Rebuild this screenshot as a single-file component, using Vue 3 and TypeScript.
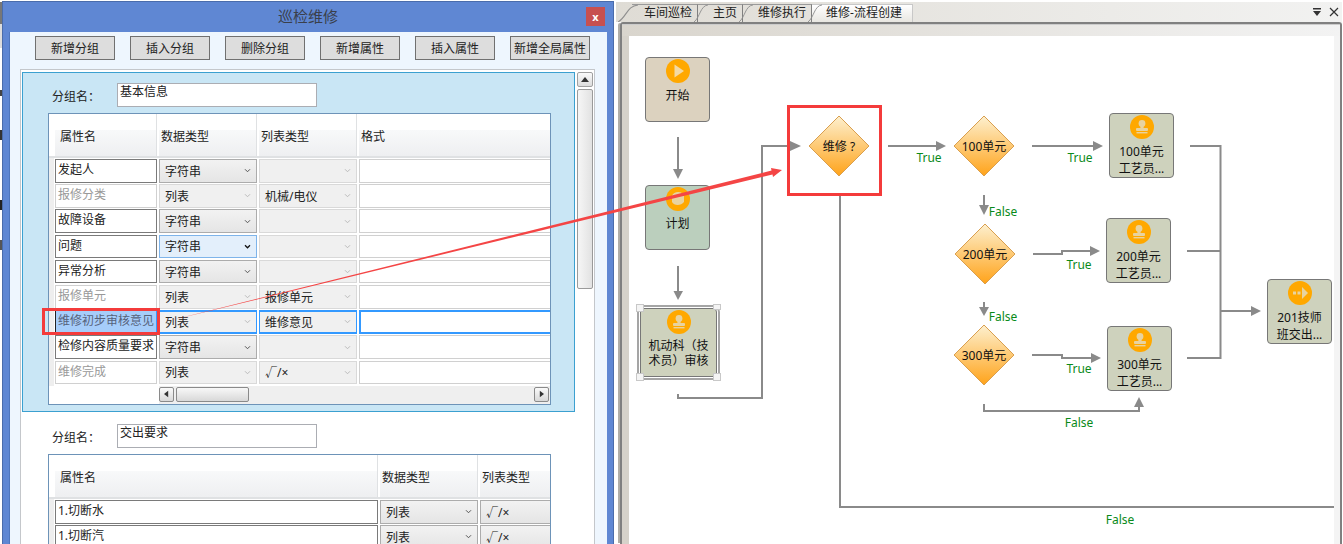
<script setup lang="ts">
type Row = {
  name: string
  type: string
  list?: string
  locked?: boolean
  selected?: boolean
  focused?: boolean
}

type FlowNode = {
  x: number
  y: number
  w: number
  h: number
  bg: string
  icon: 'play' | 'plan' | 'stamp' | 'next'
  lines: string[]
  selected?: boolean
}

const buttons = ['新增分组', '插入分组', '删除分组', '新增属性', '插入属性', '新增全局属性']

const rows: Row[] = [
  { name: '发起人', type: '字符串' },
  { name: '报修分类', type: '列表', list: '机械/电仪', locked: true },
  { name: '故障设备', type: '字符串' },
  { name: '问题', type: '字符串', focused: true },
  { name: '异常分析', type: '字符串' },
  { name: '报修单元', type: '列表', list: '报修单元', locked: true },
  { name: '维修初步审核意见', type: '列表', list: '维修意见', locked: true, selected: true },
  { name: '检修内容质量要求', type: '字符串' },
  { name: '维修完成', type: '列表', list: '√/×', locked: true },
]

const handoverRows = ['1.切断水', '1.切断汽']

const tabs = ['车间巡检', '主页', '维修执行', '维修-流程创建']

// 画布原点，下面的坐标都按整页算
const OX = 629
const OY = 36

const nodes: FlowNode[] = [
  { x: 645, y: 57, w: 65, h: 65, bg: '#dcd2bf', icon: 'play', lines: ['开始'] },
  { x: 645, y: 185, w: 65, h: 65, bg: '#bbcfbd', icon: 'plan', lines: ['计划'] },
  { x: 640, y: 308, w: 77, h: 69, bg: '#ced2bd', icon: 'stamp', lines: ['机动科（技', '术员）审核'], selected: true },
  { x: 1109, y: 113, w: 65, h: 65, bg: '#ced2bd', icon: 'stamp', lines: ['100单元', '工艺员...'] },
  { x: 1106, y: 218, w: 65, h: 65, bg: '#ced2bd', icon: 'stamp', lines: ['200单元', '工艺员...'] },
  { x: 1107, y: 326, w: 65, h: 65, bg: '#ced2bd', icon: 'stamp', lines: ['300单元', '工艺员...'] },
  { x: 1267, y: 279, w: 65, h: 65, bg: '#ced2bd', icon: 'next', lines: ['201技师', '班交出...'] },
]

const diamonds = [
  { x: 839, y: 146, text: '维修 ?' },
  { x: 984, y: 146, text: '100单元' },
  { x: 985, y: 254, text: '200单元' },
  { x: 984, y: 355, text: '300单元' },
]

const edgeLines = [
  'M678 137V170',
  'M678 266V292',
  'M678 394V398H762V146H791',
  'M840 195V507H1334',
  'M888 146H937',
  'M1032 146H1094',
  'M984 195V206',
  'M1033 254H1062V251H1091',
  'M984 302V308',
  'M1032 355H1062V358H1092',
  'M984 404V411H1139V406',
  'M1190 146H1220.5V358H1187',
  'M1187 251H1220',
  'M1220 311H1252',
]

const edgeHeads = [
  '673,169 683,169 678,179',
  '673.5,291 683,291 678,300',
  '790,141 790,151 801,146',
  '936,141 936,151 946,146',
  '1093,141 1093,151 1103,146',
  '979,205 989,205 984,215',
  '1090,246 1090,256 1100,251',
  '979,307 989,307 984,316',
  '1091,353 1091,363 1101,358',
  '1134,407 1144,407 1139,397',
  '1251,306 1251,316 1261,311',
]

const labels = [
  { x: 929, y: 158, text: 'True' },
  { x: 1080, y: 158, text: 'True' },
  { x: 1003, y: 212, text: 'False' },
  { x: 1079, y: 265, text: 'True' },
  { x: 1003, y: 317, text: 'False' },
  { x: 1079, y: 369, text: 'True' },
  { x: 1079, y: 423, text: 'False' },
  { x: 1120, y: 520, text: 'False' },
]
</script>

<template>
  <div class="screen">
    <div class="edge"></div>

    <!-- 左边的弹窗 -->
    <section class="dialog">
      <header class="dialog-title">
        <span>巡检维修</span>
        <button class="close">x</button>
      </header>

      <div class="client">
        <div class="toolbar">
          <button v-for="b in buttons" :key="b" class="tool-btn">{{ b }}</button>
        </div>

        <div class="form-box">
          <div class="groups">
            <div class="group active">
              <div class="group-head">
                <label>分组名：</label>
                <div class="group-input">基本信息</div>
              </div>
              <div class="table">
                <div class="thead cols-a">
                  <div class="th">属性名</div>
                  <div class="th">数据类型</div>
                  <div class="th">列表类型</div>
                  <div class="th">格式</div>
                </div>
                <div class="tbody">
                  <div v-for="r in rows" :key="r.name" class="tr cols-a">
                    <div class="cell name" :class="{ locked: r.locked, selected: r.selected }">{{ r.name }}</div>
                    <div class="cell select" :class="{ locked: r.locked, focused: r.focused, selected: r.selected }">
                      <span>{{ r.type }}</span>
                      <svg class="chev" viewBox="0 0 8 6"><path d="M1 1.5 4 4.5 7 1.5" /></svg>
                    </div>
                    <div class="cell select locked" :class="{ selected: r.selected }">
                      <span>{{ r.list }}</span>
                      <svg class="chev" viewBox="0 0 8 6"><path d="M1 1.5 4 4.5 7 1.5" /></svg>
                    </div>
                    <div class="cell format" :class="{ selected: r.selected }"></div>
                  </div>
                </div>
                <div class="hscroll">
                  <div class="hs-spacer"></div>
                  <div class="hs-track">
                    <div class="hs-btn"><svg viewBox="0 0 6 8"><path d="M5 0V8L0 4Z" /></svg></div>
                    <div class="hs-thumb"></div>
                    <div class="hs-btn end"><svg viewBox="0 0 6 8"><path d="M1 0V8L6 4Z" /></svg></div>
                  </div>
                </div>
              </div>
            </div>

            <div class="group">
              <div class="group-head">
                <label>分组名：</label>
                <div class="group-input">交出要求</div>
              </div>
              <div class="table">
                <div class="thead cols-b">
                  <div class="th">属性名</div>
                  <div class="th">数据类型</div>
                  <div class="th">列表类型</div>
                </div>
                <div class="tbody">
                  <div v-for="n in handoverRows" :key="n" class="tr cols-b">
                    <div class="cell name">{{ n }}</div>
                    <div class="cell select">
                      <span>列表</span>
                      <svg class="chev" viewBox="0 0 8 6"><path d="M1 1.5 4 4.5 7 1.5" /></svg>
                    </div>
                    <div class="cell select"><span>√/×</span></div>
                  </div>
                </div>
              </div>
            </div>
          </div>

          <div class="vscroll">
            <div class="vs-btn"><svg viewBox="0 0 8 5"><path d="M4 0 8 5H0Z" /></svg></div>
            <div class="vs-thumb"></div>
          </div>
        </div>
      </div>
    </section>

    <!-- 右边的流程页 -->
    <section class="workspace">
      <div class="tab-strip">
        <div class="tabs">
          <div v-for="(t, i) in tabs" :key="t" class="tab" :class="{ current: i === tabs.length - 1, first: i === 0 }">
            <svg class="slant" viewBox="0 0 16 19" preserveAspectRatio="none">
              <path d="M0 19C7 14 7 2 16 1" />
            </svg>
            {{ t }}
          </div>
        </div>
        <div class="strip-icons">
          <svg width="10" height="10" viewBox="0 0 10 10"><path d="M1 1H9V2.5H1ZM1 4H9L5 9Z" fill="#333" /></svg>
          <svg width="10" height="10" viewBox="0 0 10 10"><path d="M1 1 9 9M9 1 1 9" stroke="#333" stroke-width="1.2" /></svg>
        </div>
      </div>

      <div class="frame">
        <div class="frame-head"></div>
        <div class="frame-body">
          <div class="canvas">
            <svg class="edges" :viewBox="`${OX} ${OY} 705 508`">
              <path v-for="d in edgeLines" :key="d" :d="d" />
              <polygon v-for="p in edgeHeads" :key="p" :points="p" />
            </svg>

            <div
              v-for="n in nodes"
              :key="n.lines[0]"
              class="node"
              :class="{ picked: n.selected }"
              :style="{ left: n.x - OX + 'px', top: n.y - OY + 'px', width: n.w + 'px', height: n.h + 'px', background: n.bg }"
            >
              <svg class="badge" viewBox="0 0 24 24">
                <circle cx="12" cy="12" r="12" fill="#ffa800" />
                <path v-if="n.icon === 'play'" d="M8.5 5.5 18 12 8.5 18.5Z" fill="#f3d9a4" />
                <path v-else-if="n.icon === 'plan'" d="M6 9C7 5 13 4 16 6L14 9H18V15C15 19 8 19 6 15Z" fill="#e8d3a0" />
                <g v-else-if="n.icon === 'stamp'" fill="#e8d3a0">
                  <circle cx="12" cy="8.5" r="3.4" />
                  <rect x="10.4" y="10" width="3.2" height="4" />
                  <rect x="6" y="13" width="12" height="3" rx="1" />
                  <rect x="6.5" y="17" width="11" height="1.4" />
                </g>
                <g v-else fill="#e8d3a0">
                  <rect x="5" y="10.5" width="3" height="3" />
                  <rect x="9.5" y="10.5" width="3" height="3" />
                  <path d="M14 6 20 12 14 18Z" />
                </g>
              </svg>
              <div class="node-text">
                <div v-for="l in n.lines" :key="l">{{ l }}</div>
              </div>
              <template v-if="n.selected">
                <i class="grip tl"></i><i class="grip tr"></i><i class="grip bl"></i><i class="grip br"></i>
              </template>
            </div>

            <div
              v-for="d in diamonds"
              :key="d.text"
              class="diamond"
              :style="{ left: d.x - OX - 31 + 'px', top: d.y - OY - 31 + 'px' }"
            >
              <svg viewBox="0 0 62 62">
                <defs>
                  <linearGradient id="dia" x1="0" y1="0" x2="0" y2="1">
                    <stop offset="0" stop-color="#fdf0cf" />
                    <stop offset="1" stop-color="#ffa31a" />
                  </linearGradient>
                </defs>
                <polygon points="31,1 61,31 31,61 1,31" fill="url(#dia)" stroke="#d99f4f" />
              </svg>
              <span>{{ d.text }}</span>
            </div>

            <span
              v-for="l in labels"
              :key="l.x + '-' + l.y"
              class="edge-label"
              :style="{ left: l.x - OX + 'px', top: l.y - OY + 'px' }"
            >{{ l.text }}</span>
          </div>
        </div>
      </div>
    </section>

    <!-- 截图上的红色标注 -->
    <svg class="notes" viewBox="0 0 1343 544">
      <rect x="43.5" y="309.5" width="115" height="24" />
      <rect x="788.5" y="106.5" width="92" height="88" />
      <polygon points="164,322 772.5,174.4 773,176.9 782,170 771,168.1 771.5,170.6" />
    </svg>
  </div>
</template>

<style>
html,
body {
  margin: 0;
  background: #fff;
}
</style>

<style scoped>
.screen {
  position: relative;
  display: flex;
  width: 1343px;
  height: 544px;
  overflow: hidden;
  background: #fff;
  font-family: "Noto Sans", "Noto Sans CJK SC", sans-serif;
  font-size: 12px;
  color: #222;
}

.edge {
  width: 2px;
  flex: none;
  background: linear-gradient(#fff 0 2px, #777 2px 24px, #ddd 24px 48px, #fff 48px 90px, #444 90px 96px, #fff 96px 130px, #333 130px 140px, #fff 140px 200px, #222 200px 210px, #fff 210px 240px, #555 240px 250px, #fff 250px);
}

.dialog {
  width: 612px;
  flex: none;
  margin-top: 1px;
  display: flex;
  flex-direction: column;
  box-sizing: border-box;
  background: #5f87d3;
  border: 1px solid #4a6cab;
  border-bottom: 0;
  padding: 0 6px 0 6px;
}

.dialog-title {
  position: relative;
  height: 30px;
  flex: none;
  display: flex;
  align-items: center;
  justify-content: center;
  padding-bottom: 3px;
  box-sizing: border-box;
  font-size: 15px;
  color: #3a3f4a;
}

.close {
  position: absolute;
  right: 2px;
  top: 5px;
  width: 19px;
  height: 19px;
  padding: 0;
  border: 0;
  background: #c75050;
  color: #fff;
  font-family: inherit;
  font-size: 11px;
  font-weight: 700;
  line-height: 16px;
}

.client {
  flex: 1;
  min-height: 0;
  background: #eef6fe;
  padding: 4px 11px 0 10px;
  border-left: 1px solid #4f76bd;
}

.toolbar {
  display: flex;
  gap: 15px;
  padding-left: 15px;
}

.tool-btn {
  width: 80px;
  height: 24px;
  padding: 0;
  flex: none;
  border: 1px solid #707070;
  background: #dddddd;
  font-family: inherit;
  font-size: 12px;
  color: #222;
}

.form-box {
  display: flex;
  margin-top: 9px;
  height: 480px;
  width: 575px;
  box-sizing: border-box;
  border: 1px solid #c4c7cb;
  border-bottom: 0;
  background: #fff;
  padding: 2px 1px 0 1px;
}

.groups {
  width: 553px;
  flex: none;
}

.group {
  padding: 12px 24px 0 26px;
  box-sizing: border-box;
}

.group.active {
  height: 340px;
  padding: 10px 24px 0 25px;
  background: #c9e6f5;
  border: 1px solid #3ba0d0;
}

.group-head {
  display: flex;
  align-items: center;
  height: 24px;
}

.group-head label {
  width: 69px;
  padding: 1px 0 0 4px;
  box-sizing: border-box;
  flex: none;
}

.group-input {
  width: 200px;
  height: 24px;
  box-sizing: border-box;
  border: 1px solid #abadb3;
  background: #fff;
  padding-left: 2px;
  line-height: 16px;
}

.table {
  margin-top: 6px;
  width: 503px;
  box-sizing: border-box;
  border: 1px solid #6d93b8;
  background: #fff;
  overflow: hidden;
}

.thead {
  height: 44px;
  padding-left: 6px;
  border-bottom: 2px solid #dfe1e3;
  box-sizing: border-box;
}

.th {
  display: flex;
  align-items: center;
  padding: 2px 0 0 2px;
  background: linear-gradient(#fff 0 16px, #f8f9fa 16px, #eeeff1);
  border-right: 1px solid #dfe1e3;
}

.th:first-child {
  padding-left: 5px;
}

.cols-a {
  display: grid;
  grid-template-columns: 102px 98px 98px 200px;
  column-gap: 2px;
}

.cols-b {
  display: grid;
  grid-template-columns: 323px 98px 98px;
  column-gap: 2px;
}

.tbody {
  padding-top: 1px;
  background: linear-gradient(90deg, #eee 0 5px, #fff 5px);
}

.tr {
  height: 25.2px;
  padding: 0 0 1.6px 6px;
  box-sizing: border-box;
}

.cell {
  box-sizing: border-box;
  min-width: 0;
  border: 1px solid #9a9a9a;
  background: #fff;
  white-space: nowrap;
}

.name {
  padding: 0 0 0 2px;
  line-height: 20px;
  border-color: #7a7a7a;
}

.name.locked {
  color: #999;
  border-color: #d0d0d0;
}

.name.selected {
  color: #56627a;
  background: #a6cdfa;
  border-color: #3399ff;
  border-left: 1px solid #222;
}

.select {
  display: flex;
  align-items: center;
  justify-content: space-between;
  padding: 0 5px 0 5px;
  background: linear-gradient(#f2f2f2, #e5e5e5);
  border-color: #acacac;
}

.select.locked {
  background: #f0f0f0;
  border-color: #d9d9d9;
}

.select.focused {
  background: #e3effb;
  border-color: #7eb4ea;
}

.select.selected {
  border: 1px solid #3399ff;
  border-top-width: 2px;
  border-bottom-width: 2px;
}

.chev {
  width: 7px;
  height: 5px;
  fill: none;
  stroke: #555;
  stroke-width: 1.2;
}

.locked .chev {
  stroke: #bbb;
}

.focused .chev {
  stroke: #111;
  stroke-width: 1.5;
}

.format {
  border-color: #d0d0d0;
}

.format.selected {
  border: 2px solid #3399ff;
}

.hscroll {
  display: flex;
  height: 18px;
}

.hs-spacer {
  width: 110px;
  flex: none;
}

.hs-track {
  flex: 1;
  display: flex;
  align-items: center;
  gap: 2px;
  background: #efefef;
  padding: 0 1px 1px 0;
}

.hs-btn {
  width: 15px;
  height: 15px;
  box-sizing: border-box;
  flex: none;
  display: flex;
  align-items: center;
  justify-content: center;
  border: 1px solid #8a8a8a;
  border-radius: 2px;
  background: linear-gradient(#fafafa, #d8d8d8);
}

.hs-btn svg {
  width: 5px;
  height: 8px;
  fill: #333;
}

.hs-btn.end {
  margin-left: auto;
}

.hs-thumb {
  width: 73px;
  height: 15px;
  box-sizing: border-box;
  border: 1px solid #8a8a8a;
  border-radius: 2px;
  background: linear-gradient(#f8f8f8, #d8d8d8);
}

.vscroll {
  width: 16px;
  flex: none;
  margin-left: 2px;
}

.vs-btn {
  height: 15px;
  box-sizing: border-box;
  display: flex;
  align-items: center;
  justify-content: center;
  border: 1px solid #a0a0a0;
  border-radius: 2px;
  background: linear-gradient(#fafafa, #dcdcdc);
}

.vs-btn svg {
  width: 8px;
  height: 5px;
  fill: #333;
}

.vs-thumb {
  margin-top: 2px;
  height: 200px;
  box-sizing: border-box;
  border: 1px solid #9a9a9a;
  border-radius: 2px;
  background: linear-gradient(90deg, #f6f6f6, #e2e2e2);
}

.workspace {
  flex: 1;
  min-width: 0;
  display: flex;
  flex-direction: column;
  padding-top: 2px;
  padding-right: 1px;
}

.tab-strip {
  position: relative;
  height: 20px;
  flex: none;
  display: flex;
  justify-content: space-between;
  background: linear-gradient(90deg, #dfdcd5, #f2f2f1);
  margin-left: 2px;
}

.tabs {
  display: flex;
  padding: 2px 0 0 16px;
}

.tab {
  position: relative;
  height: 18px;
  box-sizing: border-box;
  padding: 0 5px 0 15px;
  border-top: 1px solid #9a9a9a;
  border-right: 1px solid #808080;
  line-height: 16px;
  font-size: 12px;
  color: #222;
}

.tab.first {
  padding-left: 12px;
}

.tab.current {
  background: linear-gradient(#fff, #e8e6e1);
  border-color: #c8c8c8;
  padding-left: 14px;
  padding-right: 10px;
}

.slant {
  position: absolute;
  left: -4px;
  top: -1px;
  width: 14px;
  height: 18px;
  fill: none;
  stroke: #8f8f8f;
}

.tab.first .slant {
  left: -14px;
  width: 20px;
}

.strip-icons {
  display: flex;
  align-items: center;
  gap: 7px;
  padding: 0 3px 0 0;
}

.frame {
  flex: 1;
  min-height: 0;
  display: flex;
  flex-direction: column;
  margin-left: 6px;
  border: 2px solid #808080;
  border-bottom: 0;
  border-radius: 3px 3px 0 0;
  box-shadow: -3px 0 0 -1px #b0aea8;
}

.frame-head {
  height: 11px;
  flex: none;
  background: linear-gradient(90deg, #d9d5cd, #f3f3f3);
  border-top: 1px solid #ccc;
}

.frame-body {
  flex: 1;
  min-height: 0;
  padding: 0 6px 0 7px;
  background: linear-gradient(90deg, #d6d2ca 0 7px, #f4f4f4 7px);
}

.canvas {
  position: relative;
  width: 705px;
  height: 100%;
  background: #fff;
}

.edges {
  position: absolute;
  left: 0;
  top: 0;
  width: 705px;
  height: 508px;
  fill: none;
}

.edges path {
  stroke: #8a8a8a;
  stroke-width: 2;
}

.edges polygon {
  fill: #8a8a8a;
}

.node {
  position: absolute;
  box-sizing: border-box;
  padding-top: 1px;
  border: 1px solid #777;
  border-radius: 4px;
  display: flex;
  flex-direction: column;
  align-items: center;
  color: #111;
}

.badge {
  width: 24px;
  height: 24px;
  flex: none;
}

.node-text {
  margin-top: 5px;
  line-height: 16.5px;
  text-align: center;
  white-space: nowrap;
}

.node.picked {
  outline: 2px solid #a5a5a5;
  outline-offset: 1px;
}

.node.picked .node-text {
  margin-top: 4px;
  line-height: 15px;
}

.grip {
  position: absolute;
  width: 6px;
  height: 6px;
  background: #f4f4f4;
  border: 1px solid #c8c8c8;
}

.grip.tl {
  left: -5px;
  top: -5px;
}

.grip.tr {
  right: -5px;
  top: -5px;
}

.grip.bl {
  left: -5px;
  bottom: -5px;
}

.grip.br {
  right: -5px;
  bottom: -5px;
}

.diamond {
  position: absolute;
  width: 62px;
  height: 62px;
  display: flex;
  align-items: center;
  justify-content: center;
  color: #111;
}

.diamond svg {
  position: absolute;
  inset: 0;
}

.diamond span {
  position: relative;
}

.edge-label {
  position: absolute;
  transform: translate(-50%, -50%);
  color: #0a8a1a;
  line-height: 14px;
}

.notes {
  position: absolute;
  left: 0;
  top: 0;
  width: 1343px;
  height: 544px;
  pointer-events: none;
}

.notes rect {
  fill: none;
  stroke: #f43b3b;
  stroke-width: 3;
}

.notes polygon {
  fill: #f44545;
}
</style>
